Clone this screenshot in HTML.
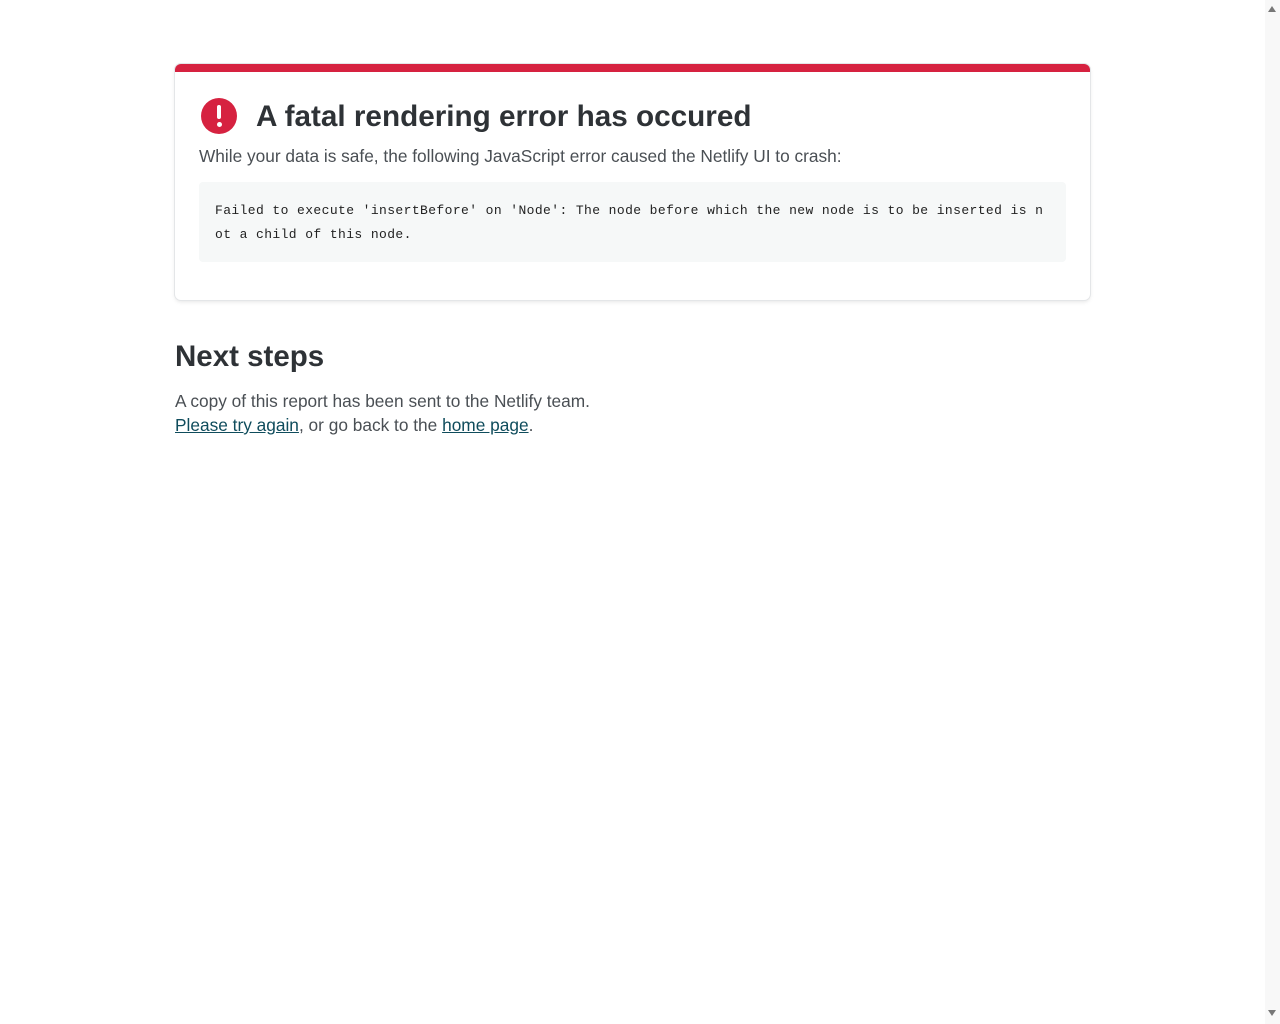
<!DOCTYPE html>
<html><head><style>
body{margin:0;background:#fff;font-family:"Liberation Sans",sans-serif;color:#2e3236;width:1280px;height:1024px;overflow:hidden;position:relative}
.sb{position:absolute;right:0;top:0;width:15px;height:1024px;background:#f8f8f8}
.sb .u{position:absolute;left:3px;top:6px;border-left:4.5px solid transparent;border-right:4.5px solid transparent;border-bottom:6px solid #777}
.sb .d{position:absolute;left:3px;bottom:8px;border-left:4.5px solid transparent;border-right:4.5px solid transparent;border-top:6px solid #777}
.card{position:absolute;left:175px;top:64px;width:915px;height:236px;border-radius:6px;box-shadow:0 0 0 1px #e4e6e8,0 2px 4px rgba(0,0,0,.1);border-top:8px solid #d62240;box-sizing:border-box;background:#fff}
.icon{position:absolute;left:26px;top:26px;width:36px;height:36px;border-radius:50%;background:#d62240}
.icon:before{content:"";position:absolute;left:16px;top:7px;width:4px;height:14px;background:#fff;border-radius:2px}
.icon:after{content:"";position:absolute;left:15.5px;top:24px;width:5px;height:5px;background:#fff;border-radius:50%}
h1{position:absolute;left:81px;top:27px;margin:0;font-size:29.7px;font-weight:bold;line-height:36px;color:#2e3236}
.p1{position:absolute;left:24px;top:74px;font-size:17.3px;color:#4a4f54}
pre{position:absolute;left:24px;top:110px;width:867px;height:80px;margin:0;background:#f6f8f8;border-radius:4px;box-sizing:border-box;padding:17px 16px;font-family:"Liberation Mono",monospace;font-size:13px;letter-spacing:0.4px;line-height:24px;color:#222;white-space:pre}
h2{position:absolute;left:175px;top:338px;margin:0;font-size:29.5px;font-weight:bold;line-height:38px}
.t{position:absolute;left:175px;top:389px;font-size:17.3px;line-height:24px;color:#4a4f54}
a{color:#0f4c5c;text-decoration:underline}
</style></head><body>
<div class="card">
<div class="icon"></div>
<h1>A fatal rendering error has occured</h1>
<div class="p1">While your data is safe, the following JavaScript error caused the Netlify UI to crash:</div>
<pre>Failed to execute 'insertBefore' on 'Node': The node before which the new node is to be inserted is n
ot a child of this node.</pre>
</div>
<h2>Next steps</h2>
<div class="t">A copy of this report has been sent to the Netlify team.<br><a>Please try again</a>, or go back to the <a>home page</a>.</div>
<div class="sb"><div class="u"></div><div class="d"></div></div>
</body></html>
